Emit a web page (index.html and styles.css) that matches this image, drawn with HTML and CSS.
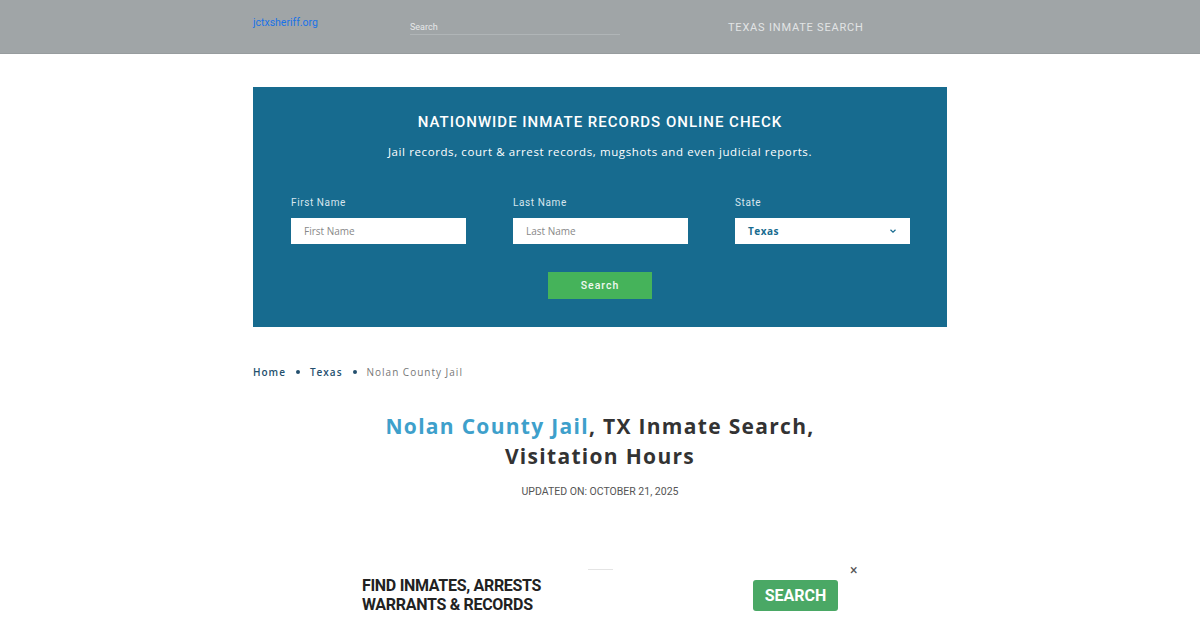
FILE: index.html
```html
<!DOCTYPE html>
<html lang="en">
<head>
    <meta charset="UTF-8">
    <meta name="viewport" content="width=device-width, initial-scale=1.0">
    <title>Nolan County Jail, TX Inmate Search</title>
    <link rel="stylesheet" href="styles.css">
</head>
<body>
    <header class="top">
        <div class="wrap top-in">
            <a class="logo" href="#">jctxsheriff.org</a>
            <div class="top-search">
                <input type="text" placeholder="Search">
            </div>
            <a class="top-link" href="#">TEXAS INMATE SEARCH</a>
        </div>
    </header>

    <div class="wrap">
        <section class="finder">
            <h2 class="finder-title">NATIONWIDE INMATE RECORDS ONLINE CHECK</h2>
            <p class="finder-sub">Jail records, court &amp; arrest records, mugshots and even judicial reports.</p>
            <div class="fields">
                <div class="field">
                    <label>First Name</label>
                    <input type="text" placeholder="First Name">
                </div>
                <div class="field">
                    <label>Last Name</label>
                    <input type="text" placeholder="Last Name">
                </div>
                <div class="field">
                    <label>State</label>
                    <div class="select">
                        <span>Texas</span>
                        <svg width="8" height="6" viewBox="0 0 8 6"><path d="M1.5 1.8 4 4.2 6.5 1.8" fill="none" stroke="#176b8f" stroke-width="1.2"/></svg>
                    </div>
                </div>
            </div>
            <div class="finder-btn">
                <button>Search</button>
            </div>
        </section>

        <nav class="crumbs">
            <a href="#">Home</a>
            <span class="dot"></span>
            <a href="#">Texas</a>
            <span class="dot"></span>
            <span class="current">Nolan County Jail</span>
        </nav>

        <h1 class="page-title"><span class="hl">Nolan County Jail</span>, TX Inmate Search,<br>Visitation Hours</h1>
        <p class="updated">UPDATED ON: OCTOBER 21, 2025</p>
    </div>

    <div class="ad">
        <div class="ad-bar"></div>
        <div class="ad-in">
            <div class="ad-text">FIND INMATES, ARRESTS<br>WARRANTS &amp; RECORDS</div>
            <a class="ad-btn" href="#">SEARCH</a>
        </div>
        <span class="ad-close">&times;</span>
    </div>
</body>
</html>
```
FILE: styles.css
```css
*{
    box-sizing: border-box;
}
body{
    margin: 0;
    font-family: Roboto, "Liberation Sans", sans-serif;
    background: #fff;
    color: #333;
    height: 620px;
    overflow: hidden;
    position: relative;
}
a{
    text-decoration: none;
}
.wrap{
    width: 694px;
    margin: 0 auto;
}
.top{
    background: #a0a5a7;
    height: 54px;
    border-bottom: 1px solid #979c9e;
}
.top-in{
    display: flex;
    align-items: flex-start;
}
.logo{
    color: #1a73e8;
    font-size: 10.5px;
    margin-top: 16px;
    width: 157px;
}
.top-search{
    width: 210px;
    margin-top: 20px;
    border-bottom: 1px solid #b0b5b7;
}
.top-search input{
    display: block;
    border: 0;
    background: transparent;
    font-family: Roboto, sans-serif;
    font-size: 9px;
    padding: 0;
    height: 14px;
    outline: none;
    width: 100%;
}
.top-search input::placeholder{
    color: #e6e8e9;
}
.top-link{
    margin-left: 108px;
    margin-top: 21px;
    color: #e2e4e5;
    font-size: 11px;
    letter-spacing: 0.8px;
}
.finder{
    margin-top: 33px;
    background: #176b8f;
    height: 240px;
    padding: 26px 38px 0;
    color: #fff;
}
.finder-title{
    margin: 0;
    text-align: center;
    font-size: 15px;
    font-weight: 500;
    letter-spacing: 1px;
    line-height: 18px;
}
.finder-sub{
    margin: 13px 0 0;
    text-align: center;
    font-family: "Open Sans", sans-serif;
    font-size: 11.5px;
    letter-spacing: 0.6px;
    line-height: 16px;
}
.fields{
    display: flex;
    gap: 47px;
    margin-top: 37px;
}
.field{
    width: 175px;
}
.field label{
    display: block;
    font-size: 10px;
    letter-spacing: 0.6px;
    color: #d8e6ee;
    line-height: 12px;
    margin-bottom: 9px;
}
.field input, .select{
    width: 175px;
    height: 26px;
    border: 0;
    background: #fff;
    padding: 0 13px;
    font-family: "Open Sans", sans-serif;
    font-size: 10px;
    outline: none;
}
.field input::placeholder{
    color: #888;
}
.select{
    display: flex;
    align-items: center;
    justify-content: space-between;
    color: #176b8f;
    font-weight: 700;
    letter-spacing: 0.5px;
}
.finder-btn{
    text-align: center;
    margin-top: 28px;
}
.finder-btn button{
    width: 104px;
    height: 27px;
    border: 0;
    background: #45b35a;
    color: #f0f8f0;
    font-family: Roboto, sans-serif;
    font-size: 10.5px;
    font-weight: 500;
    letter-spacing: 1px;
}
.crumbs{
    margin-top: 38px;
    display: flex;
    align-items: center;
    font-family: "Open Sans", sans-serif;
    font-size: 10px;
    letter-spacing: 1px;
    line-height: 14px;
}
.crumbs a{
    color: #24506e;
    font-weight: 600;
}
.dot{
    width: 4px;
    height: 4px;
    border-radius: 50%;
    background: #24506e;
    margin: 0 10px;
}
.current{
    color: #777;
}
.page-title{
    margin: 32px 0 0;
    text-align: center;
    font-family: "Open Sans", sans-serif;
    font-size: 21px;
    font-weight: 700;
    letter-spacing: 1.3px;
    line-height: 30px;
    color: #333;
}
.hl{
    color: #3ea0cb;
}
.updated{
    margin: 14px 0 0;
    text-align: center;
    font-size: 10.5px;
    color: #555;
    line-height: 14px;
}
.ad{
    position: absolute;
    left: 0;
    right: 0;
    bottom: 0;
    height: 52px;
    background: #fff;
}
.ad-bar{
    position: absolute;
    left: 588px;
    top: 1px;
    width: 25px;
    height: 1px;
    background: #e4e4e4;
}
.ad-in{
    width: 476px;
    margin-left: 362px;
    display: flex;
    align-items: center;
    justify-content: space-between;
    padding-top: 8px;
}
.ad-text{
    font-size: 16px;
    font-weight: 700;
    line-height: 19px;
    letter-spacing: -0.3px;
    color: #222;
}
.ad-btn{
    background: #4aa865;
    color: #fff;
    font-size: 16px;
    font-weight: 700;
    width: 85px;
    height: 31px;
    line-height: 31px;
    text-align: center;
    border-radius: 3px;
}
.ad-close{
    position: absolute;
    left: 850px;
    top: -6px;
    font-size: 14px;
    color: #555;
}
```
